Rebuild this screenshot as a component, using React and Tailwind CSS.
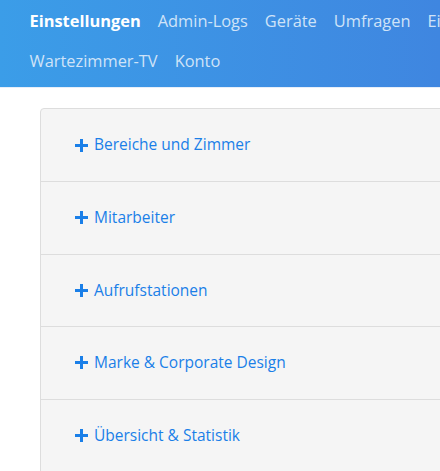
import { useState } from "react";

const navItems = [
  "Einstellungen",
  "Admin-Logs",
  "Geräte",
  "Umfragen",
  "Einladungen",
  "Wartezimmer-TV",
  "Konto",
];

const sections = [
  "Bereiche und Zimmer",
  "Mitarbeiter",
  "Aufrufstationen",
  "Marke & Corporate Design",
  "Übersicht & Statistik",
];

function PlusIcon() {
  return (
    <svg width="13" height="13" viewBox="0 0 13 13" className="shrink-0">
      <path d="M5 0h3v5h5v3H8v5H5V8H0V5h5z" fill="#1a7fe8" />
    </svg>
  );
}

function App() {
  const [active] = useState("Einstellungen");
  const [open, setOpen] = useState(null);

  return (
    <div
      className="min-h-[471px] w-[440px] overflow-hidden bg-white"
      style={{ fontFamily: '"Open Sans", "Noto Sans", sans-serif' }}
    >
      <header className="h-[88px] border-b border-[#e6eef9] bg-gradient-to-r from-[#3b9de8] to-[#3f86e0]">
        <nav className="flex w-[560px] flex-wrap pl-[21px] pt-[1px]">
          {navItems.map((item) => (
            <a
              key={item}
              className={
                "flex h-10 items-center whitespace-nowrap px-[8.5px] text-[16.4px] " +
                (item === active ? "font-bold text-white" : "text-[#cfe3f8]")
              }
            >
              {item}
            </a>
          ))}
        </nav>
      </header>

      <div className="pl-10 pt-5">
        <div className="w-[560px] rounded-tl-[4px] border border-[#dddddd] bg-[#f5f5f5]">
          {sections.map((s, i) => (
            <button
              key={s}
              onClick={() => setOpen(open === i ? null : i)}
              className={
                "flex w-full items-center gap-[6px] pl-[34px] text-left text-[15.5px] text-[#1a7fe8] " +
                (i === 0 ? "h-[73px] " : "h-[72.5px] ") +
                (i < sections.length - 1 ? "border-b border-[#dddddd]" : "")
              }
            >
              <PlusIcon />
              <span>{s}</span>
            </button>
          ))}
        </div>
      </div>
    </div>
  );
}

export default App;
